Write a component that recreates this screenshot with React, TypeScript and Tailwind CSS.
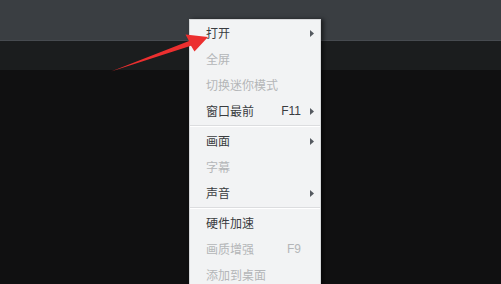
import React from 'react'

type Item =
  | { type: 'sep' }
  | { type: 'item'; label: string; disabled?: boolean; shortcut?: string; sub?: boolean }

const items: Item[] = [
  { type: 'item', label: '打开', sub: true },
  { type: 'item', label: '全屏', disabled: true },
  { type: 'item', label: '切换迷你模式', disabled: true },
  { type: 'item', label: '窗口最前', shortcut: 'F11', sub: true },
  { type: 'sep' },
  { type: 'item', label: '画面', sub: true },
  { type: 'item', label: '字幕', disabled: true },
  { type: 'item', label: '声音', sub: true },
  { type: 'sep' },
  { type: 'item', label: '硬件加速' },
  { type: 'item', label: '画质增强', shortcut: 'F9', disabled: true },
  { type: 'item', label: '添加到桌面', disabled: true },
]

function SubArrow() {
  return (
    <svg width="4" height="7" viewBox="0 0 4 7" className="shrink-0">
      <path d="M0 0 L4 3.5 L0 7 Z" fill="#555a60" />
    </svg>
  )
}

export default function App() {
  return (
    <div
      className="relative h-[284px] w-[501px] overflow-hidden bg-[#101011]"
      style={{ fontFamily: '"Noto Sans CJK SC", "Noto Sans", sans-serif' }}
    >
      <div className="h-[41px] border-b border-[#474b50] bg-[#3a3e42]" />
      <div className="h-[29px] bg-[#1b1d1e]" />

      {/* context menu */}
      <div className="absolute left-[189px] top-[19px] h-[280px] w-[132px] border border-[#d6d8da] bg-[#f2f3f4] shadow-[3px_0_4px_rgba(0,0,0,0.5)]">
        {items.map((item, i) =>
          item.type === 'sep' ? (
            <div key={i} className="my-[1px] h-[2px] border-t border-[#dcdddf] border-b border-b-white" />
          ) : (
            <div key={i} className="flex h-[26px] items-center pl-[16px] pr-[6px] text-[12px] leading-none">
              <span className={item.disabled ? 'text-[#b4b6b8]' : 'text-[#393c3f]'}>{item.label}</span>
              <span className="flex-1" />
              {item.shortcut && (
                <span
                  className={`text-[12px] ${item.disabled ? 'text-[#b4b6b8]' : 'text-[#393c3f]'}`}
                  style={{ fontFamily: '"Liberation Sans", sans-serif' }}
                >
                  {item.shortcut}
                </span>
              )}
              <span className="flex w-[13px] justify-end">{item.sub && <SubArrow />}</span>
            </div>
          )
        )}
      </div>

      {/* red annotation arrow */}
      <svg className="absolute left-0 top-0" width="501" height="284" viewBox="0 0 501 284">
        <polygon
          points="111,71.5 189,41 185.5,34.5 208,37 194.5,51.5 191,45.8"
          fill="#ec2f2f"
        />
      </svg>
    </div>
  )
}
